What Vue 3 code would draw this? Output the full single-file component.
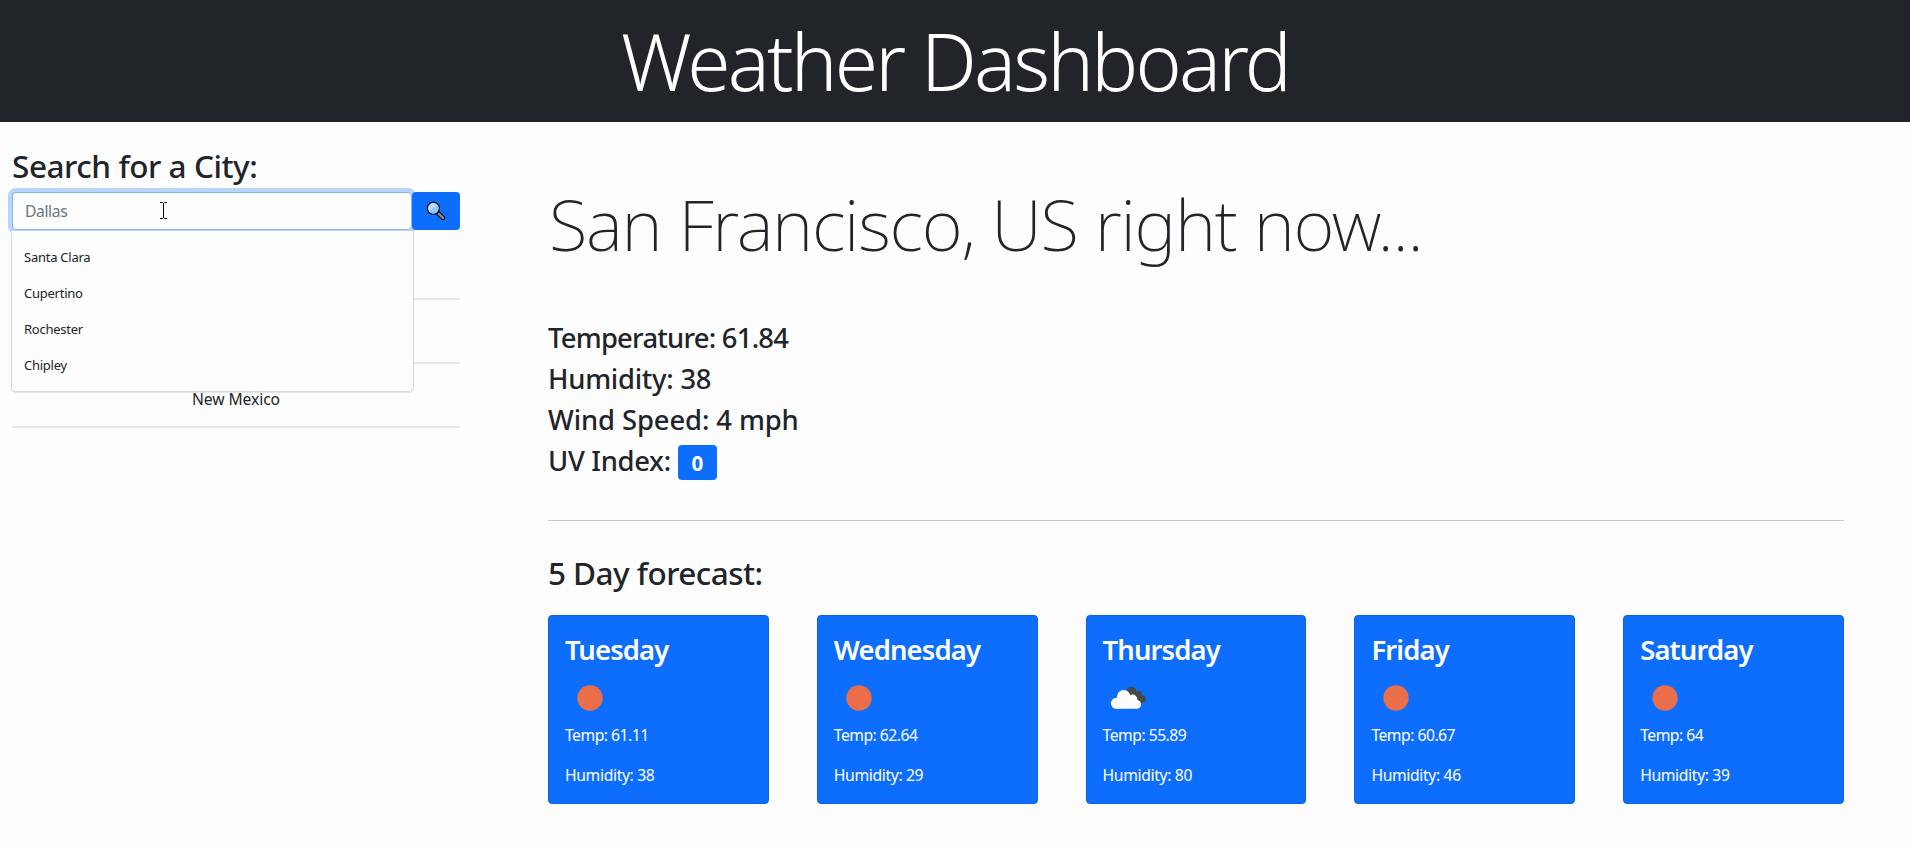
<script setup>
const suggestions = ['Santa Clara', 'Cupertino', 'Rochester', 'Chipley']
const history = ['', '', 'New Mexico']
const forecast = [
  { day: 'Tuesday', icon: 'sun', temp: '61.11', humidity: 38 },
  { day: 'Wednesday', icon: 'sun', temp: '62.64', humidity: 29 },
  { day: 'Thursday', icon: 'clouds', temp: '55.89', humidity: 80 },
  { day: 'Friday', icon: 'sun', temp: '60.67', humidity: 46 },
  { day: 'Saturday', icon: 'sun', temp: '64', humidity: 39 },
]
</script>

<template>
  <div class="page">
    <header class="header"><h1>Weather Dashboard</h1></header>
    <div class="layout">
      <aside class="sidebar">
        <h2 class="search-title">Search for a City:</h2>
        <div class="search">
          <input class="field" type="text" placeholder="Dallas" />
          <button class="search-btn" aria-label="Search">
            <svg width="20" height="20" viewBox="0 0 20 20">
              <path d="M12.300 12.300l4.600 4.500" stroke="#111" stroke-width="4.600" stroke-linecap="round" />
              <path d="M12.800 12.800l4.100 4" stroke="#8c8c8c" stroke-width="2.500" stroke-linecap="round" />
              <circle cx="7.300" cy="7.200" r="6" fill="#b9dcf8" stroke="#111" stroke-width="1.300" />
              <path d="M3.400 10.800L11.200 3.800A5.200 5.200 0 0 1 3.400 10.800z" fill="#93c8fb" />
            </svg>
          </button>
          <ul class="menu">
            <li v-for="s in suggestions" :key="s">{{ s }}</li>
          </ul>
          <svg class="cursor" width="9" height="17" viewBox="0 0 9 17">
            <path d="M1 .5h2.500l1 1 1-1H8M4.500 1v15M1 16.500h2.500l1-1 1 1H8" fill="none" stroke="#000" />
          </svg>
        </div>
        <div class="history">
          <div v-for="(h, i) in history" :key="i" class="entry">{{ h }}</div>
        </div>
      </aside>
      <main class="main">
        <h2 class="city">San Francisco, US right now...</h2>
        <div class="stats">
          <p class="digits">Temperature: 61.84</p>
          <p class="humid">Humidity: 38</p>
          <p>Wind Speed: 4 mph</p>
          <p class="uv">UV Index: <span class="badge">0</span></p>
        </div>
        <hr class="rule" />
        <h3 class="forecast-title">5 Day forecast:</h3>
        <div class="cards">
          <article v-for="f in forecast" :key="f.day" class="card">
            <h4>{{ f.day }}</h4>
            <svg class="icon" width="50" height="50" viewBox="0 0 50 50">
              <circle v-if="f.icon === 'sun'" cx="25" cy="25" r="12.700" fill="#eb6e4b" />
              <g v-else>
                <g fill="#48484a">
                  <circle cx="28.500" cy="18.700" r="4.900" />
                  <circle cx="35" cy="21.800" r="4" />
                  <circle cx="39.200" cy="26" r="3.800" />
                  <path d="M26 20l8-2 5 5v7h-6z" />
                </g>
                <g fill="#fdfdfd">
                  <circle cx="13.400" cy="30.300" r="5.500" />
                  <circle cx="20.700" cy="23.700" r="6.700" />
                  <circle cx="29.600" cy="26.300" r="4.700" />
                  <circle cx="33.600" cy="31.400" r="4.400" />
                  <path d="M13.400 24.800L26 23l8 8v4.800H13.400z" />
                </g>
              </g>
            </svg>
            <p>Temp: {{ f.temp }}</p>
            <p class="hum">Humidity: {{ f.humidity }}</p>
          </article>
        </div>
      </main>
    </div>
  </div>
</template>

<style>
body { margin: 0; background: #fdfdfd; }
</style>

<style scoped>
* { box-sizing: border-box; margin: 0; }
.page {
  height: 849px;
  overflow: hidden;
  background: #fdfdfd;
  color: #212529;
  font: 16px/24px "Noto Sans", "Open Sans", sans-serif;
}
.header { height: 122px; background: #212529; color: #fff; text-align: center; }
.header h1 { font-size: 78.4px; font-weight: 300; line-height: 122px; letter-spacing: -2.75px; }
.layout { display: flex; }
.sidebar { width: 460px; padding: 25px 0 0 12px; }
.search-title { font-size: 31.5px; font-weight: 500; line-height: 38px; letter-spacing: -.45px; margin-bottom: 7px; }
.search { position: relative; display: flex; height: 38px; }
.field {
  width: 401px;
  height: 38px;
  padding: 0 12px;
  border: 1px solid #86b7fe;
  border-radius: 4px;
  outline: 0;
  background: #fdfdfd;
  box-shadow: 0 0 0 4px #b9d5fb;
  font: 15.7px "Noto Sans", sans-serif;
  letter-spacing: -.4px;
}
.field::placeholder { color: #6c757d; opacity: 1; }
.search-btn {
  position: relative;
  width: 48px;
  padding: 0;
  display: flex;
  align-items: center;
  justify-content: center;
  border: 0;
  border-radius: 4px;
  background: #0d6efd;
}
.menu {
  position: absolute;
  z-index: 1;
  top: 39px;
  left: -1px;
  width: 403px;
  height: 161px;
  padding: 8px 0 0 12px;
  list-style: none;
  background: #fdfdfd;
  border: 1px solid #d9dadb;
  border-top: 0;
  border-radius: 0 0 5px 5px;
  box-shadow: 0 1px 1px #e4e5e6;
  font-size: 13px;
  line-height: 36px;
  letter-spacing: -.25px;
}
.cursor { position: absolute; left: 147px; top: 10px; }
.history { padding-top: 6px; }
.entry { height: 64px; padding-top: 22.500px; border-bottom: 2px solid #e7e8e8; text-align: center; font-size: 15.7px; letter-spacing: -.1px; }
.main { width: 1296px; margin-left: 88px; padding-top: 57px; }
.city { font-size: 70.5px; font-weight: 200; line-height: 90px; letter-spacing: -1.24px; padding-left: 1px; }
.stats { margin-top: 48px; font-size: 27.4px; font-weight: 500; line-height: 41px; letter-spacing: -.1px; }
.stats p { height: 41px; }
.stats .digits { letter-spacing: -.75px; }
.stats .humid { letter-spacing: -.25px; }
.stats .uv { display: flex; letter-spacing: -.3px; }
.badge {
  width: 39px;
  height: 35px;
  margin: 5px 0 0 7px;
  border-radius: 4px;
  background: #0d6efd;
  color: #fff;
  text-align: center;
  font-size: 20.6px;
  font-weight: 700;
  line-height: 37px;
}
.rule { height: 1px; margin-top: 39px; border: 0; background: #c8c9ca; }
.forecast-title { margin-top: 32px; font-size: 31.5px; font-weight: 500; line-height: 40px; letter-spacing: -.55px; }
.cards { display: grid; grid-template-columns: repeat(5, 1fr); gap: 48px; margin-top: 22px; }
.card { height: 189px; padding: 15px 16px; border: 1px solid #0b62e0; border-radius: 4px; background: #0d6efd; color: #fff; font-size: 15.7px; letter-spacing: -.5px; }
.card h4 { font-size: 27.4px; font-weight: 600; line-height: 38px; letter-spacing: -.85px; }
.card .icon { display: block; margin-top: 4px; }
.card p { line-height: 24px; }
.card .hum { margin-top: 16px; letter-spacing: -.35px; }
</style>
